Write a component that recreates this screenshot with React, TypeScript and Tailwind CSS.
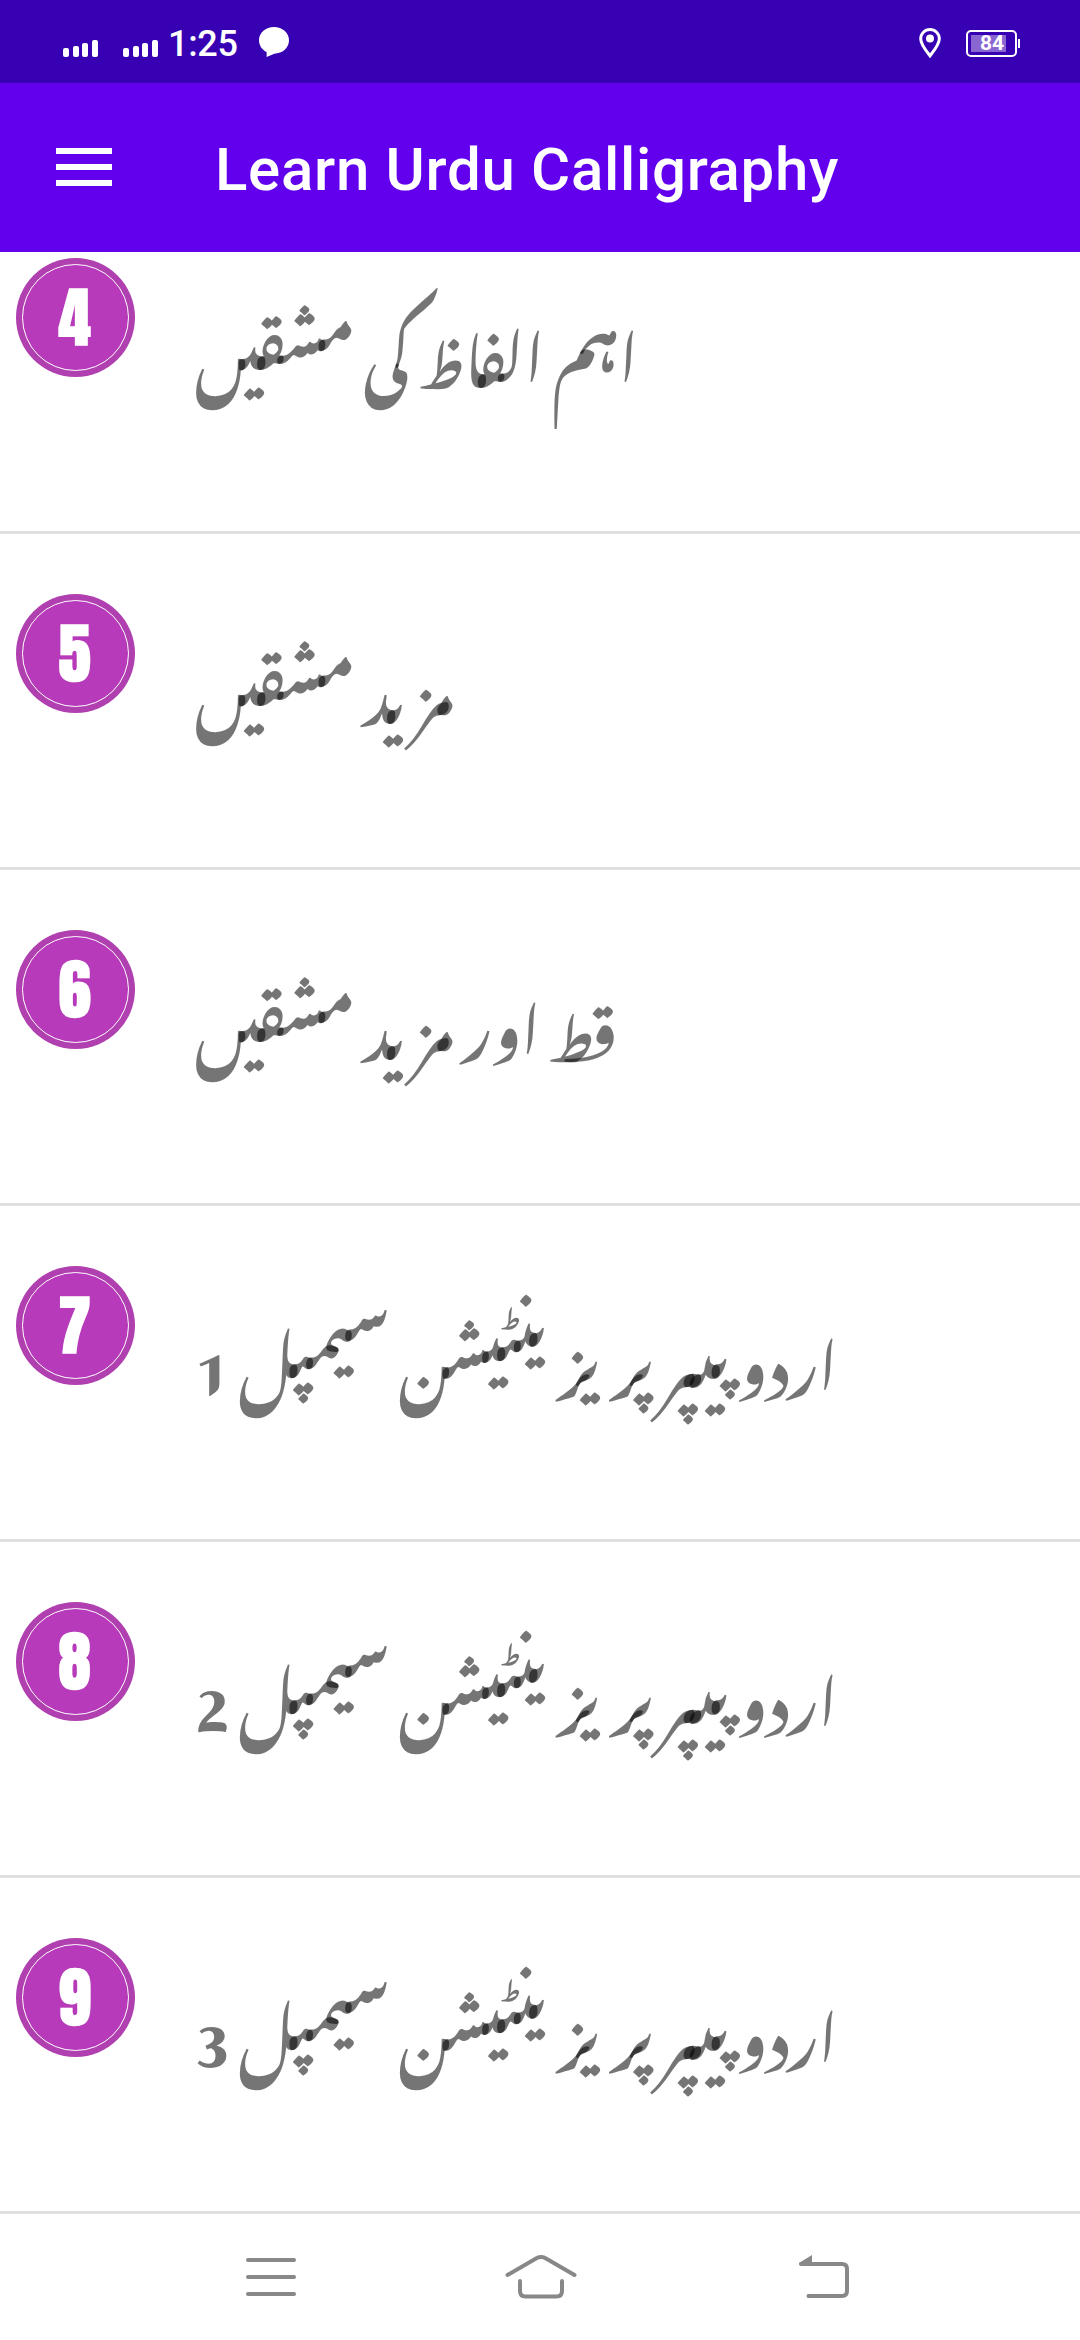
import React from 'react';

interface Lesson {
  id: number;
  title: string;
}

const lessons: Lesson[] = [
  { id: 4, title: 'اہم الفاظ کی مشقیں' },
  { id: 5, title: 'مزید مشقیں' },
  { id: 6, title: 'قط اور مزید مشقیں' },
  { id: 7, title: 'اردو پیپر پریزینٹیشن سیمپل 1' },
  { id: 8, title: 'اردو پیپر پریزینٹیشن سیمپل 2' },
  { id: 9, title: 'اردو پیپر پریزینٹیشن سیمپل 3' },
];

const SignalBars: React.FC = () => (
  <div className="flex h-[17px] w-[35px] items-end justify-between">
    <span className="h-[9px] w-1.5 rounded-[2px] bg-white" />
    <span className="h-[11px] w-1.5 rounded-[2px] bg-white" />
    <span className="h-[14px] w-1.5 rounded-[2px] bg-white" />
    <span className="h-[17px] w-1.5 rounded-[2px] bg-white" />
  </div>
);

const StatusBar: React.FC = () => (
  <div className="flex h-[83px] items-center bg-[#3700b3] pr-[60px] pl-[63px] text-white">
    <div className="mt-[14px] flex gap-[25px]">
      <SignalBars />
      <SignalBars />
    </div>
    <span className="mt-1 ml-[10px] w-[72px] text-4xl leading-[42px] font-medium tracking-[-0.3px] whitespace-nowrap">
      1:25
    </span>
    <svg className="ml-[19px]" width="30" height="30" viewBox="0 0 30 30" fill="white">
      <path d="M15 0C6.7 0 0 5.8 0 13.3c0 5.4 3.2 9.7 7.6 11.8V30l7.8-3.3C23.5 26.6 30 21 30 13.3 30 5.8 23.3 0 15 0Z" />
    </svg>
    <svg className="mt-[2px] ml-auto" width="22" height="30" viewBox="0 0 22 30">
      <path
        d="M11 1.6c-5.2 0-9.3 4-9.3 9.1 0 6 6.8 13.7 9.3 17.1 2.5-3.4 9.3-11.1 9.3-17.1 0-5.1-4.1-9.1-9.3-9.1Z"
        fill="none"
        stroke="white"
        strokeWidth="3"
      />
      <circle cx="11" cy="10.5" r="4" fill="white" />
    </svg>
    <div className="mt-1 ml-[25px] flex items-center">
      <div className="relative flex h-[27px] w-[51px] items-center justify-end rounded-[5px] border-2 border-white pr-[11px]">
        <span className="absolute top-[3px] left-[3px] h-[17px] w-[35px] bg-[#8a66d3]" />
        <span className="relative text-[21px] leading-none font-bold">84</span>
      </div>
      <span className="ml-px h-[9px] w-0.5 bg-white" />
    </div>
  </div>
);

const AppBar: React.FC = () => (
  <header className="flex h-[169px] items-center bg-[#6200ee] pl-14 text-white">
    <div className="mb-px flex w-14 flex-col gap-2.5">
      <span className="h-1.5 bg-white" />
      <span className="h-1.5 bg-white" />
      <span className="h-1.5 bg-white" />
    </div>
    <h1 className="mt-1 ml-[103px] text-[60px] leading-[70px] font-medium tracking-[0.7px] whitespace-nowrap">
      Learn Urdu Calligraphy
    </h1>
  </header>
);

const LessonRow: React.FC<{ lesson: Lesson }> = ({ lesson }) => (
  <li className="flex h-[336px] shrink-0 items-start border-b-[3px] border-[#dfdfdf] pt-[60px] pl-4">
    <div className="flex size-[119px] shrink-0 items-center justify-center rounded-full bg-[#b03fb0]">
      <div className="flex size-[107px] items-center justify-center rounded-full border-[1.5px] border-white bg-[#b63ab9] pr-0.5 pb-px font-['Anton'] text-[65px] leading-none text-white [-webkit-text-stroke:1.5px_white]">
        {lesson.id}
      </div>
    </div>
    <p
      dir="rtl"
      className="mt-[9px] ml-[60px] font-['Noto_Nastaliq_Urdu',serif] text-[60px] leading-[165px] font-bold whitespace-nowrap text-black/54"
    >
      {lesson.title}
    </p>
  </li>
);

const NavigationBar: React.FC = () => (
  <nav className="flex h-[126px] shrink-0 items-center bg-white pl-[246px] text-[#888888]">
    <div className="flex w-[50px] flex-col gap-[13px]">
      <span className="h-1 rounded-full bg-[#888888]" />
      <span className="h-1 rounded-full bg-[#888888]" />
      <span className="h-1 rounded-full bg-[#888888]" />
    </div>
    <svg className="ml-[209px]" width="72" height="44" viewBox="0 0 72 44" fill="none" stroke="currentColor" strokeWidth="4" strokeLinecap="round">
      <path d="M2.5 20 31 3.500q5-3 10 0L69.500 20" />
      <path d="M15 26v10q0 5.500 5.500 5.500h31q5.500 0 5.500-5.500V26" />
    </svg>
    <svg className="ml-[221px]" width="52" height="44" viewBox="0 0 52 44" fill="none" stroke="currentColor" strokeWidth="4" strokeLinecap="round">
      <path d="M3 9h41q5 0 5 5v22q0 5-5 5H10.500" />
      <path d="M1 8 14 0v10H2Z" fill="currentColor" stroke="none" />
    </svg>
  </nav>
);

const App: React.FC = () => (
  <div className="flex h-[2340px] w-[1080px] flex-col overflow-hidden bg-white font-['Roboto',sans-serif]">
    <StatusBar />
    <AppBar />
    {/* Scrolled so that the first visible row starts under the app bar */}
    <div className="flex h-[1962px] flex-col justify-end overflow-hidden">
      <ul className="flex flex-col">
        {lessons.map((lesson) => (
          <LessonRow key={lesson.id} lesson={lesson} />
        ))}
      </ul>
    </div>
    <NavigationBar />
  </div>
);

export default App;
